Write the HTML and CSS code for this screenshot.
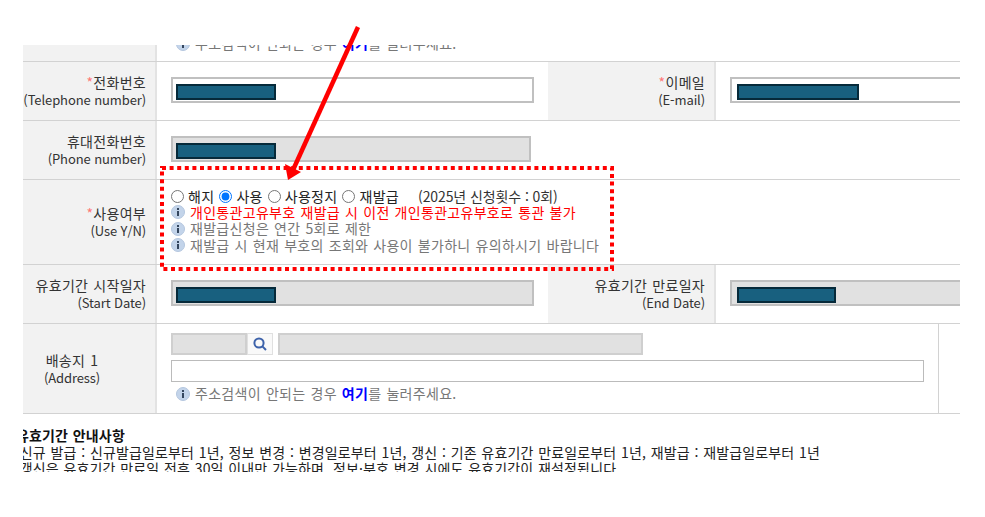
FILE: index.html
```html
<!DOCTYPE html>
<html lang="ko">
<head>
<meta charset="utf-8">
<title>사용여부</title>
<link rel="stylesheet" href="styles.css">
</head>
<body>
<svg width="0" height="0" class="defs">
  <symbol id="info" viewBox="0 0 14 14">
    <circle cx="7" cy="7" r="6.5" fill="#c3d4ea" stroke="#b4c6de"/>
    <rect x="6" y="3" width="2" height="2" fill="#34465e"/>
    <rect x="6" y="6" width="2" height="5" fill="#34465e"/>
  </symbol>
</svg>
<main class="viewport">
  <div class="row row-cut">
    <div class="th"></div>
    <div class="td td-end">
      <p class="note"><svg class="ico"><use href="#info"/></svg>주소검색이 안되는 경우 <b class="link">여기</b>를 눌러주세요.</p>
    </div>
  </div>
  <div class="row row-std">
    <div class="th"><span><i class="req">*</i>전화번호</span><span>(Telephone number)</span></div>
    <div class="td td-half"><div class="input w363"><span class="mask w100"></span></div></div>
    <div class="th th2"><span><i class="req">*</i>이메일</span><span>(E-mail)</span></div>
    <div class="td td-rest"><div class="input wfull"><span class="mask w122"></span></div></div>
  </div>
  <div class="row row-std">
    <div class="th"><span>휴대전화번호</span><span>(Phone number)</span></div>
    <div class="td"><div class="input off w360"><span class="mask w100"></span></div></div>
  </div>
  <div class="row row-use">
    <div class="th"><span><i class="req">*</i>사용여부</span><span>(Use Y/N)</span></div>
    <div class="td td-use">
      <div class="radios">
        <label><input type="radio" name="u">해지</label>
        <label><input type="radio" name="u" checked>사용</label>
        <label><input type="radio" name="u">사용정지</label>
        <label><input type="radio" name="u">재발급</label>
        <span class="count">(2025년 신청횟수 : 0회)</span>
      </div>
      <p class="line red"><svg class="ico"><use href="#info"/></svg>개인통관고유부호 재발급 시 이전 개인통관고유부호로 통관 불가</p>
      <p class="line"><svg class="ico"><use href="#info"/></svg>재발급신청은 연간 5회로 제한</p>
      <p class="line"><svg class="ico"><use href="#info"/></svg>재발급 시 현재 부호의 조회와 사용이 불가하니 유의하시기 바랍니다</p>
    </div>
  </div>
  <div class="row row-std">
    <div class="th"><span>유효기간 시작일자</span><span>(Start Date)</span></div>
    <div class="td td-half"><div class="input off w363"><span class="mask w100"></span></div></div>
    <div class="th th2"><span>유효기간 만료일자</span><span>(End Date)</span></div>
    <div class="td td-rest"><div class="input off wfull"><span class="mask w99"></span></div></div>
  </div>
  <div class="row row-addr">
    <div class="th th-center"><span>배송지 1</span><span>(Address)</span></div>
    <div class="td td-addr">
      <div class="addr-top">
        <div class="box off w76"></div>
        <div class="search">
          <svg width="14" height="14" viewBox="0 0 14 14" fill="none" stroke="#3d62aa" stroke-width="2"><circle cx="6" cy="6" r="4.6"/><path d="M9.4 9.4 13 13"/></svg>
        </div>
        <div class="box off w365"></div>
      </div>
      <div class="box w753"></div>
      <p class="note"><svg class="ico"><use href="#info"/></svg>주소검색이 안되는 경우 <b class="link">여기</b>를 눌러주세요.</p>
    </div>
    <div class="td-side"></div>
  </div>
  <section class="guide">
    <h2>유효기간 안내사항</h2>
    <p>- 신규 발급 : 신규발급일로부터 1년, 정보 변경 : 변경일로부터 1년, 갱신 : 기존 유효기간 만료일로부터 1년, 재발급 : 재발급일로부터 1년</p>
    <p>- 갱신은 유효기간 만료일 전후 30일 이내만 가능하며, 정보·부호 변경 시에도 유효기간이 재설정됩니다.</p>
  </section>
</main>
<svg class="overlay" width="985" height="517" viewBox="0 0 985 517" fill="none">
  <rect x="162" y="168" width="450" height="101" stroke="#f00" stroke-width="4" stroke-dasharray="4 3.6"/>
  <path d="M358 27 293 170" stroke="#f00" stroke-width="4.5"/>
  <path d="M288 180 285 164 301 172Z" fill="#f00"/>
</svg>
</body>
</html>
```

FILE: styles.css
```css
* { box-sizing: border-box; }
html, body { margin: 0; padding: 0; background: #fff; }
body {
  width: 985px;
  height: 517px;
  padding: 45px 0 0 23px;
  overflow: hidden;
  position: relative;
  font: 14px/17px "Noto Sans CJK KR", "Noto Sans", sans-serif;
  letter-spacing: .3px;
  word-spacing: .8px;
  color: #333;
}
.defs { position: absolute; }
.viewport { width: 937px; height: 427px; overflow: hidden; }
p { margin: 0; }

.row { display: flex; width: 100%; border-bottom: 1px solid #d2d2d2; }
.row-cut { height: 17px; overflow: hidden; }
.row-std { height: 59px; }
.row-use { height: 85px; }
.row-addr { height: 90px; }

.th {
  flex: none;
  width: 134px;
  background: #f2f2f2;
  border-right: 2px solid #e3e3e3;
  padding-right: 9px;
  display: flex;
  flex-direction: column;
  justify-content: center;
  align-items: flex-end;
  line-height: 18px;
  white-space: nowrap;
}
.th span:last-child { font-size: 13px; letter-spacing: -.1px; word-spacing: 0; }
.th2 { width: 168px; }
.th-center { align-items: center; padding-right: 34px; }
.req { color: #f77; font-style: normal; }

.td { flex: 1; min-width: 0; padding: 15px 0 0 14px; }
.td-half { flex: none; width: 391px; }
.td-rest { overflow: hidden; }
.td-end { display: flex; align-items: flex-end; padding: 0 0 9px 19px; }

.input {
  height: 26px;
  background: #fff;
  border: 2px solid #c0c0c0;
  padding: 5px 0 0 3px;
}
.off { background: #e1e1e1; }
.w363 { width: 363px; }
.w360 { width: 360px; }
.wfull { width: 260px; padding-left: 5px; }
.mask {
  display: block;
  height: 16px;
  background: #18607f;
  border: 2px solid #062a3a;
}
.w100 { width: 100px; }
.w122 { width: 122px; }
.w99 { width: 99px; }

.td-use { padding: 8px 0 0 14px; }
.radios { display: flex; align-items: center; height: 17px; color: #222; margin-bottom: -1px; }
.radios label { display: flex; align-items: center; margin-right: 5px; }
.radios input { width: 13px; height: 13px; margin: 0 4px 0 0; accent-color: #0075ff; }
.count { margin-left: 14px; color: #333; letter-spacing: -.1px; word-spacing: 0; }
.line { display: flex; align-items: center; height: 16.5px; color: #777; white-space: pre-wrap; }
.red { color: #f00; }
.ico { flex: none; width: 14px; height: 14px; margin-right: 5px; }

.td-addr { padding: 9px 0 0 14px; }
.addr-top { display: flex; margin-bottom: 5px; }
.box { height: 22px; border: 1px solid #bbb; background: #fff; }
.box.off { background: #e1e1e1; border: 2px solid #cfcfcf; }
.w76 { width: 76px; }
.w365 { width: 365px; margin-left: 5px; }
.w753 { width: 753px; }
.search {
  width: 26px;
  height: 22px;
  background: #f9f9f9;
  border: 1px solid #e0e0e0;
  display: flex;
  align-items: center;
  justify-content: center;
}
.note { display: flex; align-items: center; color: #777; white-space: pre-wrap; margin: 3px 0 0 5px; height: 17px; }
.td-end .note { margin: 0; }
.link { color: #00f; font-weight: 700; }
.td-side { flex: none; width: 22px; border-left: 1px solid #d2d2d2; }

.guide { margin: 13px 0 0 0; line-height: 16.5px; color: #222; white-space: nowrap; letter-spacing: .15px; word-spacing: .6px; }
.guide h2 { margin: 0 0 0 -7px; font-size: 14px; font-weight: 700; line-height: 16.5px; color: #111; }
.guide p { margin-left: -13px; }

.overlay { position: absolute; left: 0; top: 0; pointer-events: none; }
```
